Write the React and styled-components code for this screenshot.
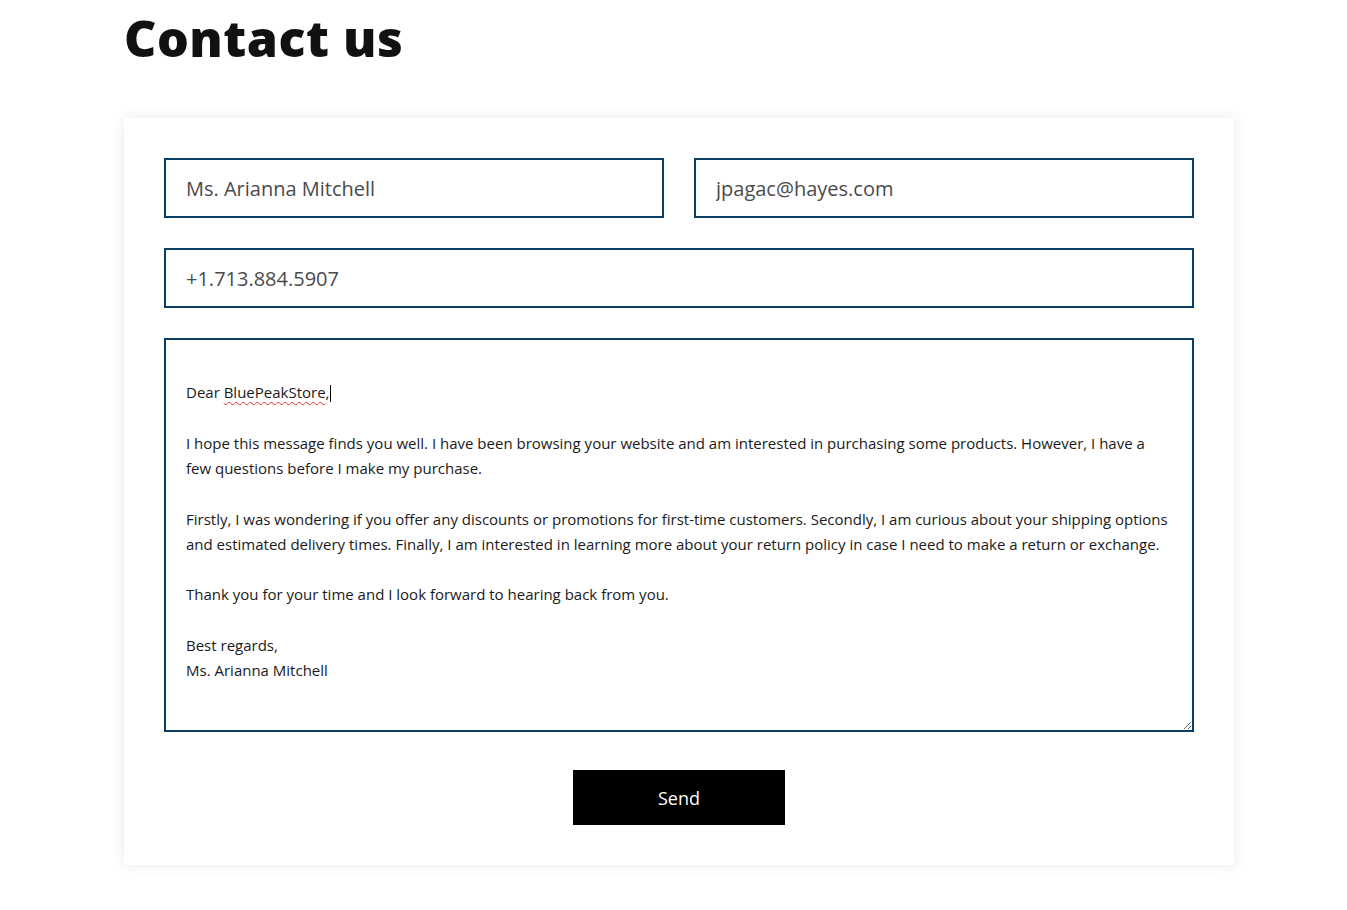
import React from 'react';
import styled, { createGlobalStyle } from 'styled-components';

const GlobalStyle = createGlobalStyle`
  html, body {
    margin: 0;
    padding: 0;
    background: #ffffff;
  }
  body {
    font-family: "Open Sans", "Liberation Sans", sans-serif;
  }
`;

const Page = styled.div`
  padding: 0 113px 45px 124px;
`;

const Title = styled.h1`
  margin: 0;
  padding-top: 6px;
  height: 112px;
  font-family: "Open Sans", sans-serif;
  font-size: 50px;
  font-weight: 800;
  letter-spacing: 0.5px;
  line-height: 64px;
  color: #111111;
`;

const FormCard = styled.form`
  width: 1110px;
  box-sizing: border-box;
  padding: 40px;
  background: #ffffff;
  box-shadow: 0 0 12px rgba(0, 0, 0, 0.09);
  display: flex;
  flex-direction: column;
  gap: 30px;
`;

const Row = styled.div`
  display: grid;
  grid-template-columns: ${props => (props.split ? '1fr 1fr' : '1fr')};
  gap: 30px;
`;

const TextInput = styled.input`
  box-sizing: border-box;
  height: 60px;
  width: 100%;
  padding: 0 20px;
  border: 2px solid #0b3f66;
  border-radius: 0;
  outline: none;
  font-family: "Open Sans", sans-serif;
  font-size: 20px;
  color: #4a4a4a;
  background: #ffffff;
`;

const MessageBox = styled.div`
  box-sizing: border-box;
  height: 394px;
  padding: 15px 20px;
  border: 2px solid #0b3f66;
  overflow: auto;
  resize: vertical;
  font-family: "Open Sans", sans-serif;
  font-size: 15px;
  line-height: 25.25px;
  color: #1a1a1a;
  white-space: nowrap;
`;

const Line = styled.div`
  min-height: 25.25px;
`;

const Misspelled = styled.span`
  text-decoration: underline wavy #e0312f;
  text-decoration-thickness: 1px;
  text-underline-offset: 3px;
`;

const Caret = styled.span`
  display: inline-block;
  width: 1px;
  height: 17px;
  margin-left: 1px;
  vertical-align: -4px;
  background: #000000;
`;

const Actions = styled.div`
  display: flex;
  justify-content: center;
  padding-top: 8px;
`;

const SendButton = styled.button`
  width: 212px;
  height: 55px;
  border: none;
  background: #000000;
  color: #ffffff;
  font-family: "Open Sans", sans-serif;
  font-size: 18px;
  font-weight: 500;
  cursor: pointer;
`;

const lines = [
  '',
  null,
  '',
  'I hope this message finds you well. I have been browsing your website and am interested in purchasing some products. However, I have a',
  'few questions before I make my purchase.',
  '',
  'Firstly, I was wondering if you offer any discounts or promotions for first-time customers. Secondly, I am curious about your shipping options',
  'and estimated delivery times. Finally, I am interested in learning more about your return policy in case I need to make a return or exchange.',
  '',
  'Thank you for your time and I look forward to hearing back from you.',
  '',
  'Best regards,',
  'Ms. Arianna Mitchell',
];

const App = () => {
  return (
    <>
      <GlobalStyle />
      <Page>
        <Title>Contact us</Title>
        <FormCard onSubmit={e => e.preventDefault()}>
          <Row split>
            <TextInput type="text" defaultValue="Ms. Arianna Mitchell" />
            <TextInput type="email" defaultValue="jpagac@hayes.com" />
          </Row>
          <Row>
            <TextInput type="tel" defaultValue="+1.713.884.5907" />
          </Row>
          <MessageBox role="textbox" aria-multiline="true">
            {lines.map((text, i) =>
              text === null ? (
                <Line key={i}>
                  Dear <Misspelled>BluePeakStore</Misspelled>,<Caret />
                </Line>
              ) : (
                <Line key={i}>{text}</Line>
              )
            )}
          </MessageBox>
          <Actions>
            <SendButton type="submit">Send</SendButton>
          </Actions>
        </FormCard>
      </Page>
    </>
  );
};

export default App;
